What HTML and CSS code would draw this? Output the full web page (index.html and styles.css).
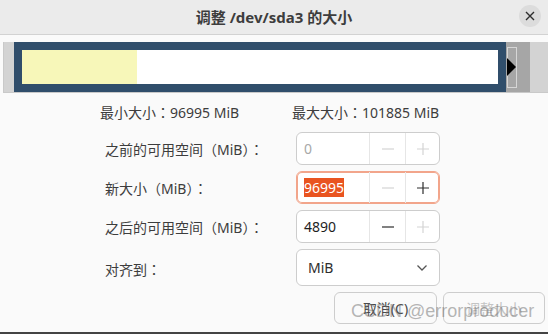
FILE: index.html
```html
<!DOCTYPE html>
<html lang="zh-CN">
<head>
    <meta charset="UTF-8">
    <title>调整 /dev/sda3 的大小</title>
    <link rel="stylesheet" href="styles.css">
</head>
<body>

    <div class="window">
        <header class="titlebar">
            <h1>调整 /dev/sda3 的大小</h1>
            <button class="close" aria-label="关闭">
                <svg width="10" height="10" viewBox="0 0 10 10"><path d="M1 1L9 9M9 1L1 9" stroke="#2e2e2e" stroke-width="1.4"/></svg>
            </button>
        </header>

        <div class="content">
            <!-- partition graphic -->
            <div class="partbar">
                <div class="part"><div class="used"></div></div>
                <div class="free">
                    <span class="handle"></span>
                    <svg class="arrow" width="9" height="18" viewBox="0 0 9 18"><path d="M0 0L9 9L0 18Z" fill="#000"/></svg>
                </div>
            </div>

            <div class="limits">
                <span class="min">最小大小：96995 MiB</span>
                <span>最大大小：101885 MiB</span>
            </div>

            <div class="form">
                <label>之前的可用空间（MiB）：</label>
                <div class="spin disabled">
                    <span class="value">0</span>
                    <span class="step off"><svg width="12" height="12" viewBox="0 0 12 12"><path d="M0 6H12"/></svg></span>
                    <span class="step off"><svg width="12" height="12" viewBox="0 0 12 12"><path d="M0 6H12M6 0V12"/></svg></span>
                </div>

                <label>新大小（MiB）：</label>
                <div class="spin focused">
                    <span class="value"><span class="selected">96995</span></span>
                    <span class="step off"><svg width="12" height="12" viewBox="0 0 12 12"><path d="M0 6H12"/></svg></span>
                    <span class="step"><svg width="12" height="12" viewBox="0 0 12 12"><path d="M0 6H12M6 0V12"/></svg></span>
                </div>

                <label>之后的可用空间（MiB）：</label>
                <div class="spin">
                    <span class="value">4890</span>
                    <span class="step"><svg width="12" height="12" viewBox="0 0 12 12"><path d="M0 6H12"/></svg></span>
                    <span class="step off"><svg width="12" height="12" viewBox="0 0 12 12"><path d="M0 6H12M6 0V12"/></svg></span>
                </div>

                <label class="tall">对齐到：</label>
                <div class="combo">
                    <span>MiB</span>
                    <svg width="12" height="8" viewBox="0 0 12 8"><path d="M1.5 1.5L6 6L10.5 1.5" fill="none" stroke="#555" stroke-width="1.3"/></svg>
                </div>
            </div>

            <div class="actions">
                <button class="btn">取消(C)</button>
                <button class="btn disabled">调整大小</button>
                <span class="watermark">CSDN @errorproducer</span>
            </div>
        </div>
        <div class="bottom-edge"></div>
    </div>

</body>
</html>
```

FILE: styles.css
```css
body {
    margin: 0;
    padding: 0;
    background: #fafafa;
    font-family: "Noto Sans", "Noto Sans CJK JP", sans-serif;
    font-feature-settings: "locl" 0;
    font-size: 14px;
    color: #3d3d3d;
}
.window {
    width: 548px;
    height: 334px;
    display: flex;
    flex-direction: column;
    overflow: hidden;
}
.titlebar {
    height: 34px;
    flex: none;
    background: #ebebeb;
    border-bottom: 1px solid #d2d2d2;
    position: relative;
    display: flex;
    align-items: center;
    justify-content: center;
}
.titlebar h1 {
    margin: 0 0 1px 0;
    font-size: 15px;
    font-weight: bold;
    color: #3d3d3d;
}
.close {
    position: absolute;
    right: 7px;
    top: 5px;
    width: 22px;
    height: 22px;
    border: none;
    border-radius: 50%;
    background: #dcdcdc;
    padding: 0;
    display: flex;
    align-items: center;
    justify-content: center;
}
.content {
    flex: 1;
    display: flex;
    flex-direction: column;
}

/* partition bar */
.partbar {
    margin: 7px 0 0 3px;
    width: 536px;
    height: 50px;
    background: #d3d3d3;
    border: 1px solid #c9c9c9;
    border-top: none;
    padding-left: 10px;
    display: flex;
}
.part {
    width: 476px;
    height: 34px;
    border: 8px solid #304e6b;
    background: #fff;
}
.used {
    width: 115px;
    height: 100%;
    background: #f7f7b9;
}
.free {
    width: 24px;
    height: 50px;
    background: #a6a6a6;
    position: relative;
}
.handle {
    position: absolute;
    left: 1px;
    top: 5px;
    width: 8px;
    height: 39px;
    border: 1px solid #d6d6d6;
}
.arrow {
    position: absolute;
    left: 1px;
    top: 16px;
}

.limits {
    display: flex;
    margin: 10px 0 0 100px;
    line-height: 20px;
}
.limits .min {
    width: 192px;
}

/* form grid */
.form {
    display: grid;
    grid-template-columns: 191px 144px;
    grid-auto-rows: 33px;
    row-gap: 6px;
    margin: 9px 0 0 105px;
}
.form label {
    display: flex;
    align-items: center;
    padding-top: 1px;
}
.form label.tall,
.form .combo {
    height: 37px;
}
.spin {
    display: flex;
    background: #fff;
    border: 1px solid #cdcdcd;
    border-radius: 6px;
}
.spin .value {
    flex: 1;
    display: flex;
    align-items: center;
    padding-left: 7px;
    color: #1e1e1e;
}
.spin.disabled .value {
    color: #a8a8a8;
}
.spin.focused {
    border-color: #f2a58b;
    box-shadow: inset 0 0 0 1px #f2a58b;
}
.selected {
    background: #e95420;
    color: #fff;
    line-height: 19px;
}
.step {
    width: 35px;
    border-left: 1px solid #e6e6e6;
    display: flex;
    align-items: center;
    justify-content: center;
}
.step:last-child {
    width: 33px;
}
.step svg path {
    stroke: #2e2e2e;
    stroke-width: 1.2;
}
.step.off svg path {
    stroke: #d4d4d4;
}
.combo {
    background: #fff;
    border: 1px solid #cdcdcd;
    border-radius: 6px;
    display: flex;
    align-items: center;
    justify-content: space-between;
    padding: 0 11px;
    color: #2e2e2e;
    box-sizing: border-box;
}

/* dialog buttons */
.actions {
    display: flex;
    justify-content: flex-end;
    gap: 6px;
    margin: 10px 3px 0 0;
    position: relative;
}
.btn {
    width: 103px;
    height: 32px;
    background: #fafafa;
    border: 1px solid #cdcdcd;
    border-radius: 6px;
    font-family: inherit;
    font-size: 14px;
    color: #4a4a4a;
}
.btn.disabled {
    width: 102px;
    color: #c4c4c4;
}
.watermark {
    position: absolute;
    left: 351px;
    top: 9px;
    font-family: "Liberation Sans", sans-serif;
    font-size: 18px;
    line-height: 20px;
    white-space: nowrap;
    color: rgba(110, 110, 110, 0.5);
    pointer-events: none;
}
.bottom-edge {
    height: 2px;
    background: #444;
    flex: none;
}
```
